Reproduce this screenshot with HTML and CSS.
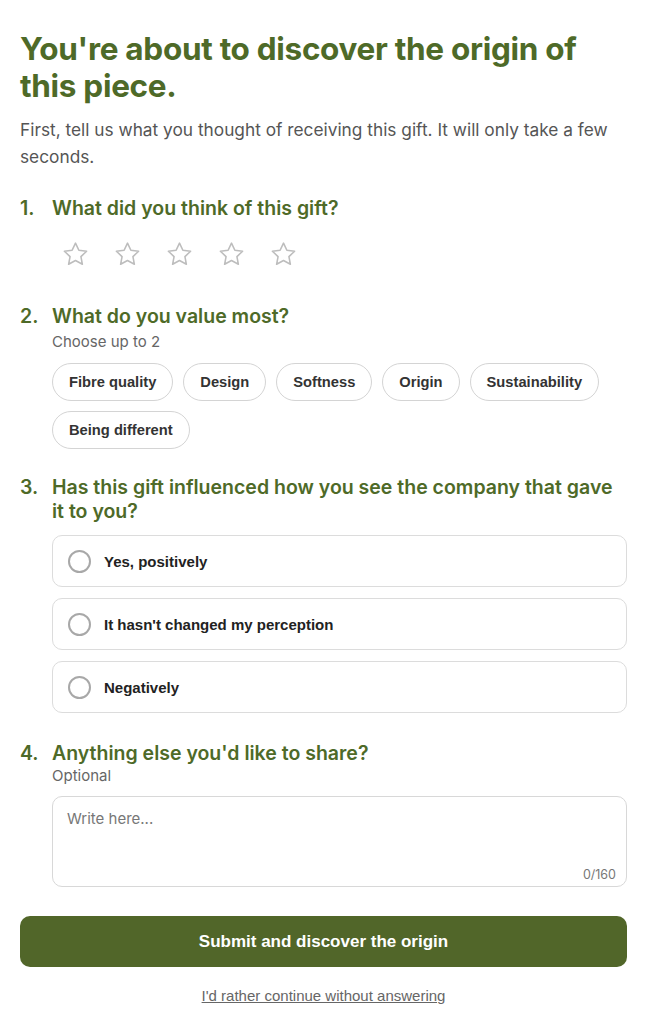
FILE: index.html
```html
<!DOCTYPE html>
<html lang="en">
<head>
    <meta charset="UTF-8">
    <meta name="viewport" content="width=device-width, initial-scale=1.0">
    <title>Discover the origin</title>
    <link rel="stylesheet" href="styles.css">
</head>
<body>
    <div class="page">
        <h1 class="title">You're about to discover the origin of this piece.</h1>
        <p class="intro">First, tell us what you thought of receiving this gift. It will only take a few seconds.</p>

        <div class="question">
            <div class="q-head"><span class="q-num">1.</span><span>What did you think of this gift?</span></div>
            <div class="stars">
                <svg class="star" viewBox="0 0 24 24"><path d="M12 2.6l2.8 5.9 6.4.8-4.7 4.4 1.2 6.4L12 17l-5.7 3.1 1.2-6.4-4.7-4.4 6.4-.8z"/></svg>
                <svg class="star" viewBox="0 0 24 24"><path d="M12 2.6l2.8 5.9 6.4.8-4.7 4.4 1.2 6.4L12 17l-5.7 3.1 1.2-6.4-4.7-4.4 6.4-.8z"/></svg>
                <svg class="star" viewBox="0 0 24 24"><path d="M12 2.6l2.8 5.9 6.4.8-4.7 4.4 1.2 6.4L12 17l-5.7 3.1 1.2-6.4-4.7-4.4 6.4-.8z"/></svg>
                <svg class="star" viewBox="0 0 24 24"><path d="M12 2.6l2.8 5.9 6.4.8-4.7 4.4 1.2 6.4L12 17l-5.7 3.1 1.2-6.4-4.7-4.4 6.4-.8z"/></svg>
                <svg class="star" viewBox="0 0 24 24"><path d="M12 2.6l2.8 5.9 6.4.8-4.7 4.4 1.2 6.4L12 17l-5.7 3.1 1.2-6.4-4.7-4.4 6.4-.8z"/></svg>
            </div>
        </div>

        <div class="question question-values">
            <div class="q-head"><span class="q-num">2.</span><span>What do you value most?</span></div>
            <div class="q-body">
                <div class="hint">Choose up to 2</div>
                <div class="chips">
                    <button class="chip">Fibre quality</button>
                    <button class="chip">Design</button>
                    <button class="chip">Softness</button>
                    <button class="chip">Origin</button>
                    <button class="chip">Sustainability</button>
                    <button class="chip">Being different</button>
                </div>
            </div>
        </div>

        <div class="question">
            <div class="q-head"><span class="q-num">3.</span><span>Has this gift influenced how you see the company that gave it to you?</span></div>
            <div class="q-body options">
                <label class="option"><span class="radio"></span>Yes, positively</label>
                <label class="option"><span class="radio"></span>It hasn't changed my perception</label>
                <label class="option"><span class="radio"></span>Negatively</label>
            </div>
        </div>

        <div class="question question-share">
            <div class="q-head"><span class="q-num">4.</span><span>Anything else you'd like to share?</span></div>
            <div class="q-body">
                <div class="hint hint-tight">Optional</div>
                <div class="textbox">
                    <span class="placeholder">Write here...</span>
                    <span class="counter">0/160</span>
                </div>
            </div>
        </div>

        <button class="submit">Submit and discover the origin</button>
        <a class="skip" href="#">I'd rather continue without answering</a>
    </div>
</body>
</html>
```

FILE: styles.css
```css
body {
    margin: 0;
    background: #fff;
    font-family: Inter, "Noto Sans", sans-serif;
    color: #555;
}
.page {
    padding: 30px 20px 0 20px;
}
.title {
    margin: 0;
    font-size: 31.5px;
    line-height: 37px;
    font-weight: 700;
    color: #4e6a28;
    letter-spacing: -0.3px;
}
.intro {
    margin: 12px 0 0 0;
    font-size: 17.3px;
    line-height: 27px;
    color: #555;
}
.question {
    margin-top: 26px;
}
.question-values {
    margin-top: 35px;
}
.question-share {
    margin-top: 28px;
}
.q-head {
    display: flex;
    font-size: 19.5px;
    line-height: 24px;
    font-weight: 600;
    color: #4e6a28;
}
.q-num {
    width: 32px;
    flex-shrink: 0;
}
.q-body {
    padding-left: 32px;
}
.stars {
    display: flex;
    gap: 23px;
    padding: 20px 0 0 41px;
}
.star {
    width: 29px;
    height: 29px;
    fill: none;
    stroke: #bdbdbd;
    stroke-width: 1.3;
    stroke-linejoin: round;
}
.hint {
    font-size: 15px;
    line-height: 20px;
    color: #666;
    margin-top: 4px;
}
.hint-tight {
    margin-top: 1px;
}
.chips {
    display: flex;
    flex-wrap: wrap;
    gap: 10px;
    margin-top: 11px;
}
.chip {
    height: 38px;
    padding: 0 16px;
    border: 1px solid #d4d4d4;
    border-radius: 19px;
    background: #fff;
    font-family: "Liberation Sans", Arial, sans-serif;
    font-size: 14.7px;
    font-weight: 700;
    color: #333;
}
.options {
    display: flex;
    flex-direction: column;
    gap: 11px;
    margin-top: 12px;
}
.option {
    display: flex;
    align-items: center;
    height: 50px;
    padding: 0 15px;
    border: 1px solid #dcdcdc;
    border-radius: 10px;
    font-family: "Liberation Sans", Arial, sans-serif;
    font-size: 15px;
    font-weight: 700;
    color: #222;
}
.radio {
    width: 19px;
    height: 19px;
    border: 2px solid #a8a8a8;
    border-radius: 50%;
    margin-right: 13px;
}
.textbox {
    position: relative;
    height: 89px;
    margin-top: 10px;
    border: 1px solid #d8d8d8;
    border-radius: 10px;
}
.placeholder {
    position: absolute;
    left: 14px;
    top: 12px;
    font-size: 15px;
    color: #777;
}
.counter {
    position: absolute;
    right: 10px;
    bottom: 4px;
    font-size: 12.5px;
    color: #777;
}
.submit {
    display: block;
    width: 100%;
    height: 51px;
    margin-top: 29px;
    border: none;
    border-radius: 10px;
    background: #516629;
    color: #fff;
    font-family: "Liberation Sans", Arial, sans-serif;
    font-size: 17px;
    font-weight: 700;
}
.skip {
    display: block;
    margin-top: 20px;
    text-align: center;
    font-family: "Liberation Sans", Arial, sans-serif;
    font-size: 15px;
    color: #666;
}
```
